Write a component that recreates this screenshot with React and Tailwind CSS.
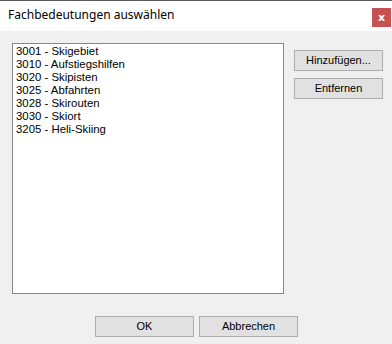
import React from "react";

const items = [
  "3001 - Skigebiet",
  "3010 - Aufstiegshilfen",
  "3020 - Skipisten",
  "3025 - Abfahrten",
  "3028 - Skirouten",
  "3030 - Skiort",
  "3205 - Heli-Skiing",
];

function Btn({ children, className = "" }) {
  return (
    <div
      className={
        "flex items-center justify-center h-[21px] border border-[#adadad] bg-[#e1e1e1] text-[11px] text-black " +
        className
      }
      style={{ fontFamily: '"Liberation Sans", Arial, sans-serif' }}
    >
      {children}
    </div>
  );
}

export default function App() {
  return (
    <div className="w-[392px] h-[344px] flex flex-col bg-[#f0f0f0] overflow-hidden">
      <div className="h-[31px] shrink-0 bg-white border-t border-[#5a5a5a] flex items-start relative">
        <div
          className="pl-[8px] pt-[6px] text-[12px] text-black leading-[16px]"
          style={{ fontFamily: '"Noto Sans", "Open Sans", sans-serif' }}
        >
          Fachbedeutungen auswählen
        </div>
        <div className="absolute left-[372px] top-[7px] w-[19px] h-[19px] bg-[#c75050] flex items-center justify-center">
          <span
            className="text-white text-[11px] font-bold leading-none"
            style={{ fontFamily: '"DejaVu Sans", sans-serif' }}
          >
            x
          </span>
        </div>
      </div>
      <div className="flex-1 flex flex-col">
        <div className="flex pt-[12px] pl-[12px]">
          <div
            className="w-[272px] h-[251px] border border-[#828790] bg-white pl-[3px] pt-[1px] text-[11.4px] text-black"
            style={{ fontFamily: '"Liberation Sans", Arial, sans-serif' }}
          >
            {items.map((t) => (
              <div key={t} className="h-[13px] leading-[13px]">
                {t}
              </div>
            ))}
          </div>
          <div className="ml-[10px] pt-[7px] flex flex-col gap-[7px]">
            <Btn className="w-[89px]">Hinzufügen...</Btn>
            <Btn className="w-[89px]">Entfernen</Btn>
          </div>
        </div>
        <div className="flex pl-[95px] pt-[22px] gap-[5px]">
          <Btn className="w-[99px]">OK</Btn>
          <Btn className="w-[99px]">Abbrechen</Btn>
        </div>
      </div>
    </div>
  );
}
